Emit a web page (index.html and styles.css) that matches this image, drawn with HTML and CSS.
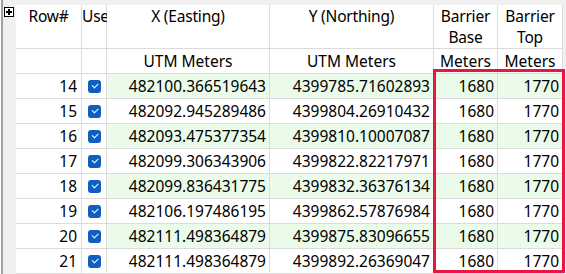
FILE: index.html
```html
<html><head><title>Barrier points</title><link rel="stylesheet" href="styles.css"></head>
<body>
<div class='frame'>
  <div class='gutter'>
    <svg class='expander' width='10' height='10' viewBox='0 0 10 10'>
      <rect x='0.5' y='0.5' width='9' height='9' fill='#ffffff' stroke='#000000'/>
      <path d='M2 5h6M5 2v6' stroke='#000000' stroke-width='2'/>
    </svg>
  </div>
  <div class='sheet'>
    <div class='grid'>
      <div class='row head'>
        <div class='c h'>Row#</div><div class='c h'>Use</div><div class='c h'>X (Easting)</div><div class='c h'>Y (Northing)</div><div class='c h'>Barrier<br>Base</div><div class='c h'>Barrier<br>Top</div>
      </div>
      <div class='row units'>
        <div class='c u'></div><div class='c u'></div><div class='c u'>UTM Meters</div><div class='c u'>UTM Meters</div><div class='c u'>Meters</div><div class='c u'>Meters</div>
      </div>
      <div class='row alt'>
        <div class='c n'>14</div><div class='c chk'><span class='box'></span></div><div class='c n g'>482100.366519643</div><div class='c n g'>4399785.71602893</div><div class='c n g'>1680</div><div class='c n g'>1770</div>
      </div>
      <div class='row'>
        <div class='c n'>15</div><div class='c chk'><span class='box'></span></div><div class='c n'>482092.945289486</div><div class='c n'>4399804.26910432</div><div class='c n'>1680</div><div class='c n'>1770</div>
      </div>
      <div class='row alt'>
        <div class='c n'>16</div><div class='c chk'><span class='box'></span></div><div class='c n g'>482093.475377354</div><div class='c n g'>4399810.10007087</div><div class='c n g'>1680</div><div class='c n g'>1770</div>
      </div>
      <div class='row'>
        <div class='c n'>17</div><div class='c chk'><span class='box'></span></div><div class='c n'>482099.306343906</div><div class='c n'>4399822.82217971</div><div class='c n'>1680</div><div class='c n'>1770</div>
      </div>
      <div class='row alt'>
        <div class='c n'>18</div><div class='c chk'><span class='box'></span></div><div class='c n g'>482099.836431775</div><div class='c n g'>4399832.36376134</div><div class='c n g'>1680</div><div class='c n g'>1770</div>
      </div>
      <div class='row'>
        <div class='c n'>19</div><div class='c chk'><span class='box'></span></div><div class='c n'>482106.197486195</div><div class='c n'>4399862.57876984</div><div class='c n'>1680</div><div class='c n'>1770</div>
      </div>
      <div class='row alt'>
        <div class='c n'>20</div><div class='c chk'><span class='box'></span></div><div class='c n g'>482111.498364879</div><div class='c n g'>4399875.83096655</div><div class='c n g'>1680</div><div class='c n g'>1770</div>
      </div>
      <div class='row'>
        <div class='c n'>21</div><div class='c chk'><span class='box'></span></div><div class='c n'>482111.498364879</div><div class='c n'>4399892.26369047</div><div class='c n'>1680</div><div class='c n'>1770</div>
      </div>
    </div>
    <div class='mark'></div>
  </div>
</div>
</body></html>
```
FILE: styles.css
```css
body { margin: 0; background-color: #ffffff; font-family: 'Noto Sans', 'Open Sans', sans-serif; font-size: 15.5px; color: #000000; }
div.frame { display: flex; height: 274px; overflow: hidden; }
div.gutter {
  width: 13px; margin-left: 1px; border-left: 2px solid #a0a0a0;
  background-color: #f0f0f0;
  }
svg.expander { display: block; margin-top: 7px; margin-left: 1px; }
div.sheet { position: relative; flex: 1; padding-top: 5px; background-color: #f0f0f0; }
div.grid {
  display: grid; grid-template-columns: 65px 24px 162px 163px 63px 64px;
  grid-template-rows: 43px 24px repeat(8, 24px);
  gap: 1px; width: max-content;
  background-color: #dcdcdc; border-right: 1px solid #dcdcdc; border-bottom: 1px solid #dcdcdc;
  }
div.row { display: contents; }
div.c { background-color: #ffffff; white-space: nowrap; overflow: hidden; }
div.c.h { text-align: center; line-height: 21px; padding-top: 1px; overflow: visible; letter-spacing: -0.2px; }
div.c.u { text-align: center; line-height: 24px; }
div.c.n { text-align: right; line-height: 24px; padding-right: 3px; }
div.row div.c.n:first-child { padding-right: 4px; }
div.c.g { background-color: #eafbea; }
div.c.chk { display: flex; align-items: center; justify-content: center; }
span.box {
  display: block; width: 13px; height: 13px; border-radius: 3px; background-color: #0f5fc2;
  position: relative;
  }
span.box::after {
  content: ''; position: absolute; left: 4px; top: 3px; width: 5px; height: 2.5px;
  border-left: 1px solid #ffffff; border-bottom: 1px solid #ffffff; transform: rotate(-45deg);
  }
div.mark {
  position: absolute; left: 417px; top: 69px; width: 126px; height: 198px;
  border: 3px solid #e8173f;
  }
```
